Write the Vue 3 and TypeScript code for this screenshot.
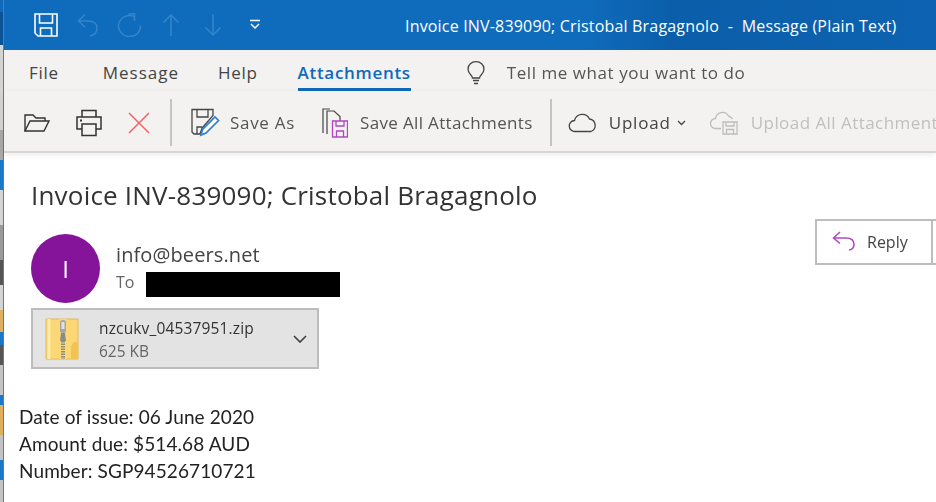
<script setup lang="ts">
const body = ['Date of issue: 06 June 2020', 'Amount due: $514.68 AUD', 'Number: SGP94526710721']
</script>

<template>
  <div class="win">
    <div class="strip"></div>
    <div class="main">
      <header class="title">
        <div class="qat">
          <svg class="q save" width="24" height="24" viewBox="0 0 24 24" fill="none" stroke="#fff" stroke-width="1.6"><path d="M1 1h22v22H4l-3-3z"/><path d="M5.500 1.500v8.500h13V1.500"/><path d="M6.500 23v-8h11v8"/></svg>
          <svg class="q" width="22" height="24" viewBox="0 0 22 24" fill="none" stroke="#3585ca" stroke-width="1.500"><path d="M8 1.500 1.500 8 8 14"/><path d="M2 8h9c5.500 0 9 2.500 9 7 0 4-3 7-7 8"/></svg>
          <svg class="q" width="25" height="24" viewBox="0 0 25 24" fill="none" stroke="#3585ca" stroke-width="1.500"><path d="M17 3.500A11 10.500 0 1 0 23.500 12.500"/><path d="M11.500 1h6v7"/></svg>
          <svg class="q" width="18" height="24" viewBox="0 0 18 24" fill="none" stroke="#3585ca" stroke-width="1.500"><path d="M9 23V2M1.500 9.500 9 2l7.500 7.500"/></svg>
          <svg class="q" width="18" height="24" viewBox="0 0 18 24" fill="none" stroke="#3585ca" stroke-width="1.500"><path d="M9 1v21M1.500 14.500 9 22l7.500-7.500"/></svg>
          <svg class="q more" width="12" height="12" viewBox="0 0 12 12" fill="none" stroke="#fff" stroke-width="1.500"><path d="M1 1.500h10M2 5l4 4 4-4"/></svg>
        </div>
        <div class="caption">Invoice INV-839090; Cristobal Bragagnolo&nbsp; -&nbsp; Message (Plain Text)</div>
      </header>

      <nav class="tabs">
        <span class="tab t-file">File</span>
        <span class="tab t-msg">Message</span>
        <span class="tab t-help">Help</span>
        <span class="tab active">Attachments</span>
        <svg class="bulb" width="20" height="24" viewBox="0 0 20 24" fill="none" stroke="#444" stroke-width="1.300"><path d="M6.500 17c0-3-4.500-4-4.500-9a8 7.300 0 0 1 16 0c0 5-4.500 6-4.500 9z"/><path d="M7 19.500h6M8 22.500h4"/></svg>
        <span class="tell">Tell me what you want to do</span>
      </nav>

      <div class="tools">
        <svg class="ic-open" width="28" height="22" viewBox="0 0 28 22" fill="none" stroke="#333" stroke-width="1.400"><path d="M2 19V3h8l3 3h9v3"/><path d="M2 19 7 9h19l-5 10z"/></svg>
        <svg class="ic-print" width="28" height="28" viewBox="0 0 28 28" fill="none" stroke="#333" stroke-width="1.500"><path d="M7 8V1.500h14V8"/><path d="M7 20H2V8h24v12h-5"/><path d="M7 15h14v11.500H7z"/><path d="M5 11.500h2" stroke-width="2"/></svg>
        <svg class="ic-x" width="22" height="22" viewBox="0 0 22 22" fill="none" stroke="#f0625f" stroke-width="1.500"><path d="M1 1l20 20M21 1 1 21"/></svg>
        <i class="sep s1"></i>
        <svg class="ic-saveas" width="30" height="30" viewBox="0 0 30 30" fill="none"><path d="M2 1.500h21v6L12 20l-2 6H4l-2-2z" stroke="#444" stroke-width="1.300"/><path d="M7 2v7h11V2M7 26v-7h5" stroke="#444" stroke-width="1.300"/><path d="M11 27l1.500-5.500L25 9l3.500 3.500L16 25z" fill="#fff" stroke="#2b7cd3" stroke-width="1.700"/></svg>
        <span class="tl t-saveas">Save As</span>
        <svg class="ic-saveall" width="27" height="30" viewBox="0 0 27 30" fill="none"><path d="M2 25V1h7" stroke="#444" stroke-width="1.200"/><path d="M6 26V3h7l6 5.500V13" stroke="#444" stroke-width="1.200"/><path d="M11.500 13h15v16h-15z" fill="#f3f2f1" stroke="#b146c2" stroke-width="1.300"/><path d="M15 13v5h8v-5M15.500 29v-6h7v6" stroke="#b146c2" stroke-width="1.300"/></svg>
        <span class="tl t-saveall">Save All Attachments</span>
        <i class="sep s2"></i>
        <svg class="ic-cloud" width="30" height="20" viewBox="0 0 30 20" fill="none" stroke="#444" stroke-width="1.300"><path d="M7 18.500a5.500 5.500 0 0 1-.5-11 8 8 0 0 1 15-1.500 6.500 6.500 0 0 1 1.500 12.500z"/></svg>
        <span class="tl t-upload">Upload</span>
        <svg class="ic-caret" width="9" height="6" viewBox="0 0 9 6" fill="none" stroke="#444" stroke-width="1.300"><path d="M1 1l3.500 3.500L8 1"/></svg>
        <svg class="ic-cloud2" width="30" height="24" viewBox="0 0 30 24" fill="none" stroke="#bdbdbd" stroke-width="1.300"><path d="M12 17.500H6.500a5 5 0 0 1 0-10 7 7 0 0 1 13-2.500 6 6 0 0 1 4 3"/><path d="M14 11h14v12H14z" fill="#f3f2f1"/><path d="M17 11v4h8v-4M17.500 23v-4.500h7V23"/></svg>
        <span class="tl dim">Upload All Attachments</span>
      </div>

      <section class="msg">
        <h1 class="subject">Invoice INV-839090; Cristobal Bragagnolo</h1>
        <div class="head">
          <div class="sender">
            <div class="avatar">I</div>
            <div class="who">
              <div class="from">info@beers.net</div>
              <div class="to"><span>To</span><b class="redact"></b></div>
            </div>
          </div>
          <div class="reply">
            <div class="rbtn">
              <svg width="24" height="24" viewBox="0 0 24 24" fill="none" stroke="#b146c2" stroke-width="1.500"><path d="M8 2 1.500 8 8 13.500"/><path d="M2 8h12c5 0 8 2 8 6.500 0 3-1.500 5-5 5.500"/></svg>
              <span>Reply</span>
            </div>
          </div>
        </div>
        <div class="att">
          <svg class="zip" width="34" height="42" viewBox="0 0 34 42"><path d="M1 1h32v40H1z" fill="#fbd875" stroke="#e6b84e"/><path d="M4 1v40" stroke="#fdeaa8" stroke-width="3"/><path d="M26 28l3-4h4v17h-7z" fill="#f1c34f"/><path d="M14 1h8v40h-8z" fill="#fbd875"/><rect x="15" y="2" width="6" height="13" rx="2.500" fill="#a5a5a5"/><rect x="16.500" y="4" width="3" height="7" fill="#e2e2e2"/><path d="M16 15h4l1 8h-6z" fill="#8b8b8b"/><path d="M18 23v18" stroke="#8f8f7e" stroke-width="4" stroke-dasharray="1.500 1"/></svg>
          <div class="meta">
            <div class="fname">nzcukv_04537951.zip</div>
            <div class="fsize">625 KB</div>
          </div>
          <svg class="chev" width="14" height="8" viewBox="0 0 14 8" fill="none" stroke="#444" stroke-width="1.700"><path d="M1 1l6 6 6-6"/></svg>
        </div>
        <div class="body">
          <p v-for="line in body" :key="line">{{ line }}</p>
        </div>
      </section>
    </div>
  </div>
</template>

<style>
html, body { margin: 0; background: #fff; overflow: hidden; }
</style>

<style scoped>
.win { display: flex; width: 936px; height: 502px; overflow: hidden; font-family: "Open Sans", "Noto Sans", sans-serif; color: #333; filter: blur(.3px); }
.strip { width: 3px; flex: none; border-right: 1px solid #2b88d8; background: linear-gradient(#0f6abb 0 12px, #0b5394 12px 45px, #d4d4d4 45px 130px, #a9a9a9 130px 160px, #1a78c8 160px 190px, #d4d4d4 190px 225px, #9a9a9a 225px 260px, #555 260px 285px, #d4d4d4 285px 310px, #e0b060 310px 332px, #1a78c8 332px 345px, #555 345px 365px, #c4c4c4 365px 395px, #1a78c8 395px 405px, #e0b060 405px 435px, #c4c4c4 435px 460px, #1a78c8 460px 480px, #c4c4c4 480px); }
.main { flex: 1; min-width: 0; display: flex; flex-direction: column; }

.title { height: 50px; flex: none; background: linear-gradient(90deg, #0f6cbd 0 62%, #0b5ea9 72%, #0d63b1 100%); display: flex; align-items: center; }
.qat { display: flex; align-items: center; margin-left: 30px; }
.q { flex: none; }
.save { margin-right: 19px; }
.qat svg:nth-child(2) { margin-right: 18px; }
.qat svg:nth-child(3) { margin-right: 20px; }
.qat svg:nth-child(4) { margin-right: 24px; }
.more { margin-left: 27px; }
.caption { margin-left: 144px; padding-top: 2px; color: #fff; font-size: 16px; white-space: nowrap; letter-spacing: .18px; }

.tabs { height: 41px; flex: none; background: #f3f2f1; display: flex; align-items: flex-end; font-size: 17px; letter-spacing: .7px; color: #444; }
.tab { padding-bottom: 6px; line-height: 24px; white-space: nowrap; }
.t-file { margin-left: 25px; }
.t-msg { margin-left: 44px; letter-spacing: 1px; }
.t-help { margin-left: 39px; }
.active { margin-left: 40px; color: #0f6abb; font-weight: 600; border-bottom: 3px solid #0f6abb; padding-bottom: 3px; }
.bulb { margin: 0 0 6px 55px; flex: none; }
.tell { margin: 0 0 6px 21px; line-height: 24px; color: #555; white-space: nowrap; letter-spacing: .55px; }

.tools { height: 62px; flex: none; box-sizing: border-box; position: relative; background: #f3f2f1; border-bottom: 2px solid #d8d6d5; box-shadow: 0 2px 6px rgba(0,0,0,.08); display: flex; align-items: center; padding: 3px 0 0 19px; font-size: 17px; letter-spacing: .45px; color: #555; overflow-x: clip; }
.tools svg { flex: none; }
.ic-print { margin-left: 24px; }
.ic-x { margin-left: 25px; }
.sep { width: 2px; height: 47px; background: #c4c3c2; flex: none; }
.s1 { margin-left: 20px; }
.ic-saveas { margin-left: 18px; }
.tl { white-space: nowrap; }
.t-saveas { margin-left: 10px; letter-spacing: .7px; }
.ic-saveall { margin-left: 26px; }
.t-saveall { margin-left: 12px; letter-spacing: .35px; }
.s2 { margin-left: 17px; }
.ic-cloud { margin-left: 16px; }
.t-upload { margin-left: 11px; color: #444; letter-spacing: .8px; }
.ic-caret { margin-left: 6px; }
.ic-cloud2 { margin-left: 23px; }
.dim { margin-left: 12px; color: #bfbfbf; }

.msg { flex: 1; min-height: 0; background: #fff; }
.subject { margin: 25px 0 0 27px; font-size: 26px; letter-spacing: .2px; line-height: 34px; font-weight: 400; color: #333; white-space: nowrap; }
.head { display: flex; justify-content: space-between; margin-top: 22px; }
.sender { display: flex; margin-left: 27px; }
.avatar { width: 69px; height: 69px; border-radius: 50%; background: #86149a; color: #fff; display: flex; align-items: center; justify-content: center; font-size: 24px; font-weight: 400; }
.who { margin-left: 16px; }
.from { font-size: 20px; letter-spacing: .1px; line-height: 26px; margin-top: 8px; color: #444; }
.to { display: flex; align-items: flex-start; margin-top: 4px; font-size: 16px; line-height: 20px; color: #666; }
.redact { display: block; margin-left: 12px; width: 194px; height: 25px; background: #000; }
.reply { width: 121px; height: 46px; box-sizing: border-box; border: 2px solid #bdbdbd; border-right: 0; margin-top: -15px; }
.rbtn { display: flex; align-items: center; height: 100%; padding-left: 15px; gap: 11px; font-size: 16px; color: #444; border-right: 2px solid #bdbdbd; width: 116px; box-sizing: border-box; }

.att { width: 288px; height: 61px; box-sizing: border-box; margin: 5px 0 0 27px; background: #e3e3e3; border: 2px solid #bcbcbc; display: flex; align-items: center; padding-left: 12px; }
.meta { margin-left: 20px; margin-top: 2px; font-size: 15.500px; line-height: 23px; letter-spacing: .15px; }
.fname { color: #333; }
.fsize { color: #666; font-size: 15.500px; letter-spacing: 0; }
.chev { margin-left: auto; margin-right: 10px; }

.body { margin: 34px 0 0 15px; font-family: "Lato", sans-serif; font-size: 19px; letter-spacing: .1px; line-height: 27px; color: #222; }
.body p { margin: 0; white-space: nowrap; }
</style>
